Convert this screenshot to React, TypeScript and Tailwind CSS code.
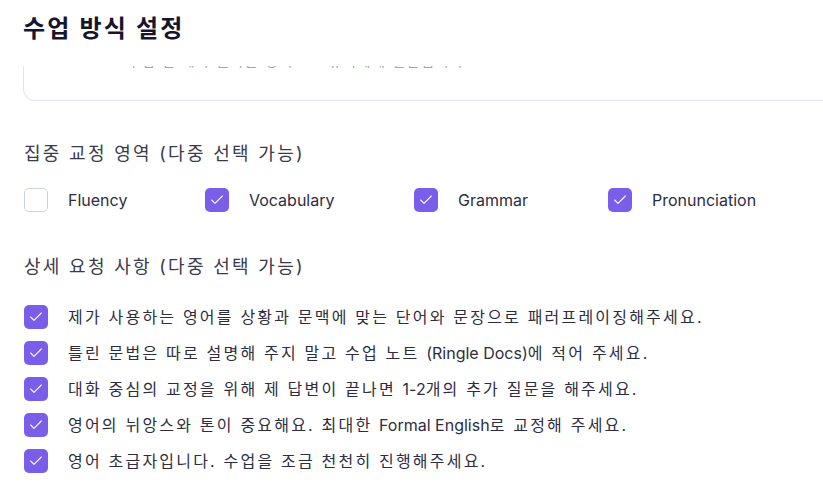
import { Check } from "lucide-react";
import { ReactNode } from "react";

const focusAreas = [
  { label: "Fluency", checked: false, width: "w-[181px]" },
  { label: "Vocabulary", checked: true, width: "w-[209px]" },
  { label: "Grammar", checked: true, width: "w-[194px]" },
  { label: "Pronunciation", checked: true, width: "w-auto" },
];

// 영문 구간은 자간을 기본값으로
const En = ({ children }: { children: ReactNode }) => <span className="tracking-normal">{children}</span>;

const requests: ReactNode[] = [
  "제가 사용하는 영어를 상황과 문맥에 맞는 단어와 문장으로 패러프레이징해주세요.",
  <>틀린 문법은 따로 설명해 주지 말고 수업 노트 <En>(Ringle Docs)</En>에 적어 주세요.</>,
  <>대화 중심의 교정을 위해 제 답변이 끝나면 <En>1-2</En>개의 추가 질문을 해주세요.</>,
  <>영어의 뉘앙스와 톤이 중요해요. 최대한 <En>Formal English</En>로 교정해 주세요.</>,
  "영어 초급자입니다. 수업을 조금 천천히 진행해주세요.",
];

// 체크박스 (선택 / 미선택)
function Box({ checked }: { checked: boolean }) {
  return checked ? (
    <span className="flex h-6 w-6 shrink-0 items-center justify-center rounded-[5px] bg-[#7a5eea]">
      <Check className="h-4 w-4 text-white" strokeWidth={1.6} />
    </span>
  ) : (
    <span className="h-6 w-6 shrink-0 rounded-[5px] border border-[#c8d2e4] bg-white" />
  );
}

export default function App() {
  return (
    <div className="h-[500px] w-[823px] overflow-hidden bg-white font-['Inter','Noto_Sans_CJK_KR',sans-serif] text-[#2d2d3d]">
      {/* 헤더 */}
      <div className="flex h-[66px] items-start px-[23px] pt-[12px]">
        <h1 className="text-[24px] font-bold leading-[34px] tracking-[2.2px] text-[#15152b]">수업 방식 설정</h1>
      </div>

      {/* 스크롤 되어 위가 잘린 카드 */}
      <div className="ml-[23px] h-[35px] w-[820px] overflow-hidden rounded-b-xl border-x border-b border-[#e3e3f1]">
        <p className="-mt-[15px] pl-[89px] text-[14px] leading-[20px] tracking-[1.6px] text-[#a3a3b8]">
          * 수업 전 제가 원하는 방식으로 튜터에게 전달됩니다
        </p>
      </div>

      <div className="px-[24px]">
        <h2 className="mt-[40px] text-[18px] leading-[26px] tracking-[2.3px] text-[#3a3a4c]">집중 교정 영역 (다중 선택 가능)</h2>
        <div className="mt-[21px] flex items-center">
          {focusAreas.map((a) => (
            <label key={a.label} className={`flex items-center gap-[20px] ${a.width}`}>
              <Box checked={a.checked} />
              <span className="text-[16px] leading-6 text-[#2d2d3f]">{a.label}</span>
            </label>
          ))}
        </div>

        <h2 className="mt-[42px] text-[18px] leading-[26px] tracking-[2.3px] text-[#3a3a4c]">상세 요청 사항 (다중 선택 가능)</h2>
        <div className="mt-[25px] flex flex-col gap-[12px]">
          {requests.map((r, i) => (
            <label key={i} className="flex items-center gap-[20px]">
              <Box checked />
              <span className="text-[16px] leading-6 tracking-[2.2px] text-[#2d2d3f]">{r}</span>
            </label>
          ))}
        </div>
      </div>
    </div>
  );
}
